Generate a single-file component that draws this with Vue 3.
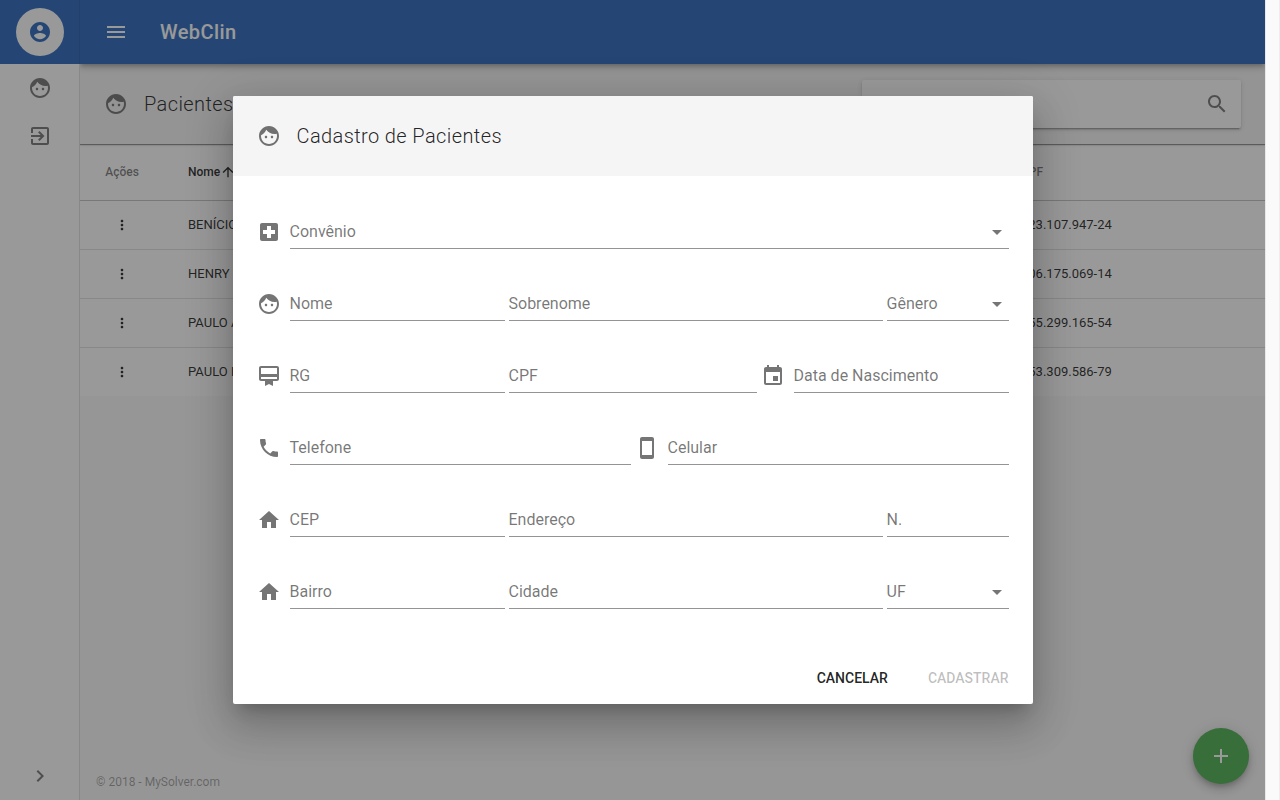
<script setup>
import { reactive, ref } from 'vue'

const icons = {
  account: 'M12 2C6.48 2 2 6.48 2 12s4.48 10 10 10 10-4.48 10-10S17.52 2 12 2zm0 3c1.66 0 3 1.34 3 3s-1.34 3-3 3-3-1.34-3-3 1.34-3 3-3zm0 14.2c-2.5 0-4.71-1.28-6-3.22.03-1.99 4-3.08 6-3.08 1.99 0 5.97 1.09 6 3.08-1.29 1.94-3.5 3.22-6 3.22z',
  face: 'M9 11.75c-.69 0-1.25.56-1.25 1.25s.56 1.25 1.25 1.25 1.25-.56 1.25-1.25-.56-1.25-1.25-1.25zm6 0c-.69 0-1.25.56-1.25 1.25s.56 1.25 1.25 1.25 1.25-.56 1.25-1.25-.56-1.25-1.25-1.25zM12 2C6.48 2 2 6.48 2 12s4.48 10 10 10 10-4.48 10-10S17.52 2 12 2zm0 18c-4.41 0-8-3.59-8-8 0-.29.02-.58.05-.86 2.36-1.05 4.23-2.98 5.21-5.37C11.07 8.33 14.05 10 17.42 10c.78 0 1.53-.09 2.25-.26.21.71.33 1.47.33 2.26 0 4.41-3.59 8-8 8z',
  exit: 'M10.09 15.59L11.5 17l5-5-5-5-1.41 1.41L12.67 11H3v2h9.67l-2.58 2.59zM19 3H5c-1.11 0-2 .9-2 2v4h2V5h14v14H5v-4H3v4c0 1.1.89 2 2 2h14c1.1 0 2-.9 2-2V5c0-1.1-.9-2-2-2z',
  chevron: 'M10 6L8.59 7.41 13.17 12l-4.58 4.59L10 18l6-6z',
  menu: 'M3 18h18v-2H3v2zm0-5h18v-2H3v2zm0-7v2h18V6H3z',
  search: 'M15.5 14h-.79l-.28-.27C15.41 12.59 16 11.11 16 9.5 16 5.91 13.09 3 9.5 3S3 5.91 3 9.5 5.91 16 9.5 16c1.61 0 3.09-.59 4.23-1.57l.27.28v.79l5 4.99L20.49 19l-4.99-5zm-6 0C7.01 14 5 11.99 5 9.5S7.01 5 9.5 5 14 7.01 14 9.5 11.99 14 9.5 14z',
  arrowUp: 'M4 12l1.41 1.41L11 7.83V20h2V7.83l5.58 5.59L20 12l-8-8-8 8z',
  more: 'M12 8c1.1 0 2-.9 2-2s-.9-2-2-2-2 .9-2 2 .9 2 2 2zm0 2c-1.1 0-2 .9-2 2s.9 2 2 2 2-.9 2-2-.9-2-2-2zm0 6c-1.1 0-2 .9-2 2s.9 2 2 2 2-.9 2-2-.9-2-2-2z',
  add: 'M19 13h-6v6h-2v-6H5v-2h6V5h2v6h6v2z',
  hospital: 'M19 3H5c-1.1 0-1.99.9-1.99 2L3 19c0 1.1.9 2 2 2h14c1.1 0 2-.9 2-2V5c0-1.1-.9-2-2-2zm-1 11h-4v4h-4v-4H6v-4h4V6h4v4h4v4z',
  membership: 'M20 2H4c-1.11 0-2 .89-2 2v11c0 1.11.89 2 2 2h4v5l4-2 4 2v-5h4c1.11 0 2-.89 2-2V4c0-1.11-.89-2-2-2zm0 13H4v-2h16v2zm0-5H4V4h16v6z',
  event: 'M17 12h-5v5h5v-5zM16 1v2H8V1H6v2H5c-1.11 0-1.99.9-1.99 2L3 19c0 1.1.89 2 2 2h14c1.1 0 2-.9 2-2V5c0-1.1-.9-2-2-2h-1V1h-2zm3 18H5V8h14v11z',
  phone: 'M6.62 10.79c1.44 2.83 3.76 5.14 6.59 6.59l2.2-2.2c.27-.27.67-.36 1.02-.24 1.12.37 2.33.57 3.57.57.55 0 1 .45 1 1V20c0 .55-.45 1-1 1-9.39 0-17-7.61-17-17 0-.55.45-1 1-1h3.5c.55 0 1 .45 1 1 0 1.25.2 2.45.57 3.57.11.35.03.74-.25 1.02l-2.2 2.2z',
  mobile: 'M17 1.01L7 1c-1.1 0-2 .9-2 2v18c0 1.1.9 2 2 2h10c1.1 0 2-.9 2-2V3c0-1.1-.9-1.99-2-1.99zM17 19H7V5h10v14z',
  home: 'M10 20v-6h4v6h5v-8h3L12 3 2 12h3v8z',
  dropdown: 'M7 10l5 5 5-5z'
}

const patients = [
  { name: 'BENÍCIO', cpf: '023.107.947-24' },
  { name: 'HENRY', cpf: '006.175.069-14' },
  { name: 'PAULO A', cpf: '055.299.165-54' },
  { name: 'PAULO H', cpf: '053.309.586-79' }
]

const rows = [
  [{ id: 'convenio', label: 'Convênio', icon: 'hospital', size: 'full', select: true }],
  [
    { id: 'nome', label: 'Nome', icon: 'face', size: 'small' },
    { id: 'sobrenome', label: 'Sobrenome', size: 'large' },
    { id: 'genero', label: 'Gênero', size: 'tiny', select: true }
  ],
  [
    { id: 'rg', label: 'RG', icon: 'membership', size: 'small' },
    { id: 'cpf', label: 'CPF', size: 'medium' },
    { id: 'nascimento', label: 'Data de Nascimento', icon: 'event', size: 'small' }
  ],
  [
    { id: 'telefone', label: 'Telefone', icon: 'phone', size: 'full' },
    { id: 'celular', label: 'Celular', icon: 'mobile', size: 'full' }
  ],
  [
    { id: 'cep', label: 'CEP', icon: 'home', size: 'small' },
    { id: 'endereco', label: 'Endereço', size: 'large' },
    { id: 'numero', label: 'N.', size: 'tiny' }
  ],
  [
    { id: 'bairro', label: 'Bairro', icon: 'home', size: 'small' },
    { id: 'cidade', label: 'Cidade', size: 'large' },
    { id: 'uf', label: 'UF', size: 'tiny', select: true }
  ]
]

const form = reactive({})
const query = ref('')
</script>

<template>
  <div class="window">
    <div class="app">
      <nav class="sidebar">
        <div class="brand">
          <button class="avatar" aria-label="Conta">
            <svg class="icon" viewBox="0 0 24 24"><path :d="icons.account" /></svg>
          </button>
        </div>
        <a class="nav-item" href="#pacientes" aria-label="Pacientes">
          <svg class="icon" viewBox="0 0 24 24"><path :d="icons.face" /></svg>
        </a>
        <a class="nav-item" href="#sair" aria-label="Sair">
          <svg class="icon" viewBox="0 0 24 24"><path :d="icons.exit" /></svg>
        </a>
        <button class="nav-item expand" aria-label="Expandir">
          <svg class="icon" viewBox="0 0 24 24"><path :d="icons.chevron" /></svg>
        </button>
      </nav>

      <div class="main">
        <header class="topbar">
          <button class="menu" aria-label="Menu">
            <svg class="icon" viewBox="0 0 24 24"><path :d="icons.menu" /></svg>
          </button>
          <h1 class="app-name">WebClin</h1>
        </header>

        <div class="subbar">
          <svg class="icon" viewBox="0 0 24 24"><path :d="icons.face" /></svg>
          <h2 class="heading">Pacientes</h2>
          <div class="search">
            <input v-model="query" class="search-input" type="search" aria-label="Pesquisar" />
            <svg class="icon" viewBox="0 0 24 24"><path :d="icons.search" /></svg>
          </div>
        </div>

        <table class="table">
          <thead>
            <tr>
              <th class="col-actions">Ações</th>
              <th class="sorted">
                <span class="sort">Nome
                  <svg class="sort-icon" viewBox="0 0 24 24"><path :d="icons.arrowUp" /></svg>
                </span>
              </th>
              <th class="col-cpf">CPF</th>
            </tr>
          </thead>
          <tbody>
            <tr v-for="p in patients" :key="p.cpf">
              <td class="col-actions">
                <button class="more" aria-label="Ações">
                  <svg class="more-icon" viewBox="0 0 24 24"><path :d="icons.more" /></svg>
                </button>
              </td>
              <td>{{ p.name }}</td>
              <td class="col-cpf">{{ p.cpf }}</td>
            </tr>
          </tbody>
        </table>

        <footer class="footer">© 2018 - MySolver.com</footer>
      </div>

      <button class="fab" aria-label="Adicionar">
        <svg class="icon" viewBox="0 0 24 24"><path :d="icons.add" /></svg>
      </button>

      <div class="overlay">
        <form class="dialog" role="dialog" aria-labelledby="dialog-title" @submit.prevent>
          <div class="dialog-header">
            <svg class="icon" viewBox="0 0 24 24"><path :d="icons.face" /></svg>
            <h2 id="dialog-title" class="heading">Cadastro de Pacientes</h2>
          </div>
          <div class="dialog-body">
            <div v-for="(row, i) in rows" :key="i" class="row">
              <template v-for="f in row" :key="f.id">
                <svg v-if="f.icon" class="icon row-icon" viewBox="0 0 24 24"><path :d="icons[f.icon]" /></svg>
                <div class="field" :class="f.size">
                  <label v-show="!form[f.id]" class="label" :for="f.id">{{ f.label }}</label>
                  <select v-if="f.select" :id="f.id" v-model="form[f.id]" class="control"></select>
                  <input v-else :id="f.id" v-model="form[f.id]" class="control" type="text" />
                  <svg v-if="f.select" class="icon drop" viewBox="0 0 24 24"><path :d="icons.dropdown" /></svg>
                </div>
              </template>
            </div>
          </div>
          <div class="dialog-actions">
            <button class="action" type="button">CANCELAR</button>
            <button class="action" type="submit" disabled>CADASTRAR</button>
          </div>
        </form>
      </div>
    </div>
    <div class="scroll-track"></div>
  </div>
</template>

<style>
body {
  margin: 0;
}
</style>

<style scoped>
.window {
  display: flex;
  height: 100vh;
  font-family: Roboto, "Liberation Sans", sans-serif;
  color: rgba(0, 0, 0, 0.87);
}
.window * {
  box-sizing: border-box;
}
button,
input,
select {
  margin: 0;
  padding: 0;
  border: 0;
  background: none;
  font: inherit;
  color: inherit;
  outline: 0;
}
.icon {
  width: 24px;
  height: 24px;
  flex: none;
  display: block;
  fill: currentColor;
}
.app {
  position: relative;
  flex: 1;
  min-width: 0;
  display: flex;
  background: #fafafa;
  overflow: hidden;
}
.scroll-track {
  width: 15px;
  background: #fafafa;
  border-left: 1px solid #e8e8e8;
  border-right: 1px solid #ededed;
}
.sidebar {
  position: relative;
  z-index: 3;
  width: 80px;
  display: flex;
  flex-direction: column;
  background: #fff;
  border-right: 1px solid #e0e0e0;
}
.brand {
  height: 64px;
  margin-right: -1px;
  border-right: 1px solid #245ba6;
  display: flex;
  justify-content: center;
  align-items: center;
  background: #2967bc;
}
.avatar {
  width: 48px;
  height: 48px;
  border-radius: 50%;
  background: #fff;
  color: #2967bc;
  display: flex;
  justify-content: center;
  align-items: center;
}
.nav-item {
  height: 48px;
  display: flex;
  justify-content: center;
  align-items: center;
  color: rgba(0, 0, 0, 0.54);
}
.expand {
  margin-top: auto;
}
.main {
  flex: 1;
  min-width: 0;
  display: flex;
  flex-direction: column;
}
.topbar {
  position: relative;
  z-index: 2;
  height: 64px;
  flex: none;
  padding: 0 24px;
  display: flex;
  align-items: center;
  gap: 32px;
  background: #2967bc;
  color: #fff;
  box-shadow: 0 2px 4px -1px rgba(0, 0, 0, 0.2), 0 4px 5px 0 rgba(0, 0, 0, 0.14), 0 1px 10px 0 rgba(0, 0, 0, 0.12);
}
.app-name {
  margin: 0;
  font-size: 20px;
  line-height: 28px;
  font-weight: 500;
  letter-spacing: 0.02em;
}
.heading {
  margin: 0;
  font-size: 20px;
  line-height: 28px;
  font-weight: 300;
  letter-spacing: 0.02em;
}
.subbar {
  position: relative;
  z-index: 1;
  height: 80px;
  flex: none;
  padding: 0 24px;
  display: flex;
  align-items: center;
  gap: 16px;
  background: #f5f5f5;
  box-shadow: 0 1px 1px 0 rgba(0, 0, 0, 0.4), 0 1px 3px 0 rgba(0, 0, 0, 0.12);
}
.subbar > .icon,
.search .icon,
.dialog-header .icon,
.row-icon,
.drop {
  color: rgba(0, 0, 0, 0.54);
}
.search {
  width: calc(100% / 3);
  height: 48px;
  margin-left: auto;
  padding: 0 12px;
  display: flex;
  align-items: center;
  background: #fff;
  border-radius: 2px;
  box-shadow: 0 3px 1px -2px rgba(0, 0, 0, 0.2), 0 2px 2px 0 rgba(0, 0, 0, 0.14), 0 1px 5px 0 rgba(0, 0, 0, 0.12);
}
.search-input {
  flex: 1;
  min-width: 0;
  font-size: 16px;
}
.table {
  width: 100%;
  table-layout: fixed;
  border-collapse: separate;
  border-spacing: 0;
  background: #fff;
  font-size: 13px;
}
.table th {
  height: 57px;
  padding: 0 24px;
  border-bottom: 1px solid rgba(0, 0, 0, 0.24);
  text-align: left;
  font-size: 12px;
  font-weight: 500;
  color: rgba(0, 0, 0, 0.54);
}
.table th.sorted {
  color: rgba(0, 0, 0, 0.87);
}
.sort {
  display: flex;
  align-items: center;
}
.sort-icon {
  width: 16px;
  height: 16px;
  fill: currentColor;
}
.table td {
  height: 49px;
  padding: 0 24px 1px;
  border-bottom: 1px solid rgba(0, 0, 0, 0.12);
}
.table tbody tr:last-child td {
  height: 48px;
  border-bottom: 0;
}
.table .col-actions {
  width: 84px;
  padding: 0;
  text-align: center;
}
.col-cpf {
  width: 268px;
}
.more {
  display: inline-flex;
  vertical-align: middle;
}
.more-icon {
  width: 16px;
  height: 16px;
  fill: currentColor;
}
.footer {
  margin-top: auto;
  padding: 8px 16px;
  font-size: 12px;
  line-height: 20px;
  color: rgba(0, 0, 0, 0.38);
}
.fab {
  position: absolute;
  right: 16px;
  bottom: 16px;
  z-index: 3;
  width: 56px;
  height: 56px;
  border-radius: 50%;
  display: flex;
  justify-content: center;
  align-items: center;
  background: #4caf50;
  color: #fff;
  box-shadow: 0 3px 5px -1px rgba(0, 0, 0, 0.2), 0 6px 10px 0 rgba(0, 0, 0, 0.14), 0 1px 18px 0 rgba(0, 0, 0, 0.12);
}
.overlay {
  position: absolute;
  inset: 0;
  z-index: 4;
  display: flex;
  justify-content: center;
  align-items: center;
  background: rgba(33, 33, 33, 0.46);
}
.dialog {
  width: 100%;
  max-width: 800px;
  background: #fff;
  border-radius: 2px;
  overflow: hidden;
  box-shadow: 0 11px 15px -7px rgba(0, 0, 0, 0.2), 0 24px 38px 3px rgba(0, 0, 0, 0.14), 0 9px 46px 8px rgba(0, 0, 0, 0.12);
}
.dialog-header {
  height: 80px;
  padding: 0 24px;
  display: flex;
  align-items: center;
  gap: 16px;
  background: #f5f5f5;
}
.dialog-body {
  padding: 20px 24px 24px;
}
.row {
  height: 72px;
  display: flex;
  align-items: center;
  gap: 4px;
}
.row-icon {
  margin-right: 5px;
}
.field {
  height: 34px;
  min-width: 0;
  flex-basis: 0;
  display: grid;
  grid-template-columns: minmax(0, 1fr);
  align-items: center;
  border-bottom: 1px solid rgba(0, 0, 0, 0.42);
  font-size: 16px;
}
.field > * {
  grid-area: 1 / 1;
}
.full {
  flex-grow: 720;
}
.large {
  flex-grow: 374;
}
.medium {
  flex-grow: 248;
}
.small {
  flex-grow: 215;
}
.tiny {
  flex-grow: 122;
}
.label {
  line-height: 24px;
  color: rgba(0, 0, 0, 0.54);
}
.control {
  width: 100%;
  height: 32px;
  appearance: none;
}
.drop {
  justify-self: end;
  pointer-events: none;
}
.dialog-actions {
  padding: 8px;
  display: flex;
  justify-content: flex-end;
  gap: 8px;
}
.action {
  height: 36px;
  padding: 0 16px;
  border-radius: 2px;
  font-size: 14px;
  font-weight: 500;
}
.action:disabled {
  color: rgba(0, 0, 0, 0.26);
}
</style>
